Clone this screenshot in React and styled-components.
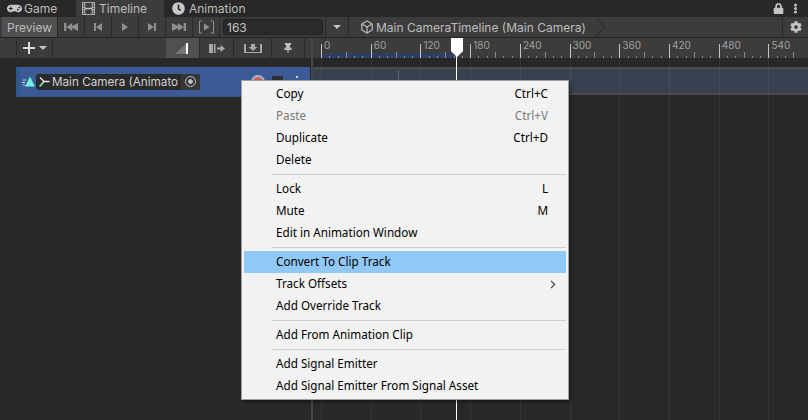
import React from 'react'
import styled, { createGlobalStyle } from 'styled-components'
import { FaGamepad, FaLock, FaClock, FaCog, FaThumbtack } from 'react-icons/fa'
import { BsFilm } from 'react-icons/bs'
import { LuBox } from 'react-icons/lu'

const Global = createGlobalStyle`
  html, body { margin: 0; padding: 0; background: #282828; }
  * { box-sizing: border-box; }
`

const TICK_START = 321
const TICK_STEP = 49.72
const LABELS = [0, 60, 120, 180, 240, 300, 360, 420, 480, 540]

const menu = [
  [
    { label: 'Copy', key: 'Ctrl+C' },
    { label: 'Paste', key: 'Ctrl+V', disabled: true },
    { label: 'Duplicate', key: 'Ctrl+D' },
    { label: 'Delete' },
  ],
  [
    { label: 'Lock', key: 'L' },
    { label: 'Mute', key: 'M' },
    { label: 'Edit in Animation Window' },
  ],
  [
    { label: 'Convert To Clip Track', active: true },
    { label: 'Track Offsets', arrow: true },
    { label: 'Add Override Track' },
  ],
  [{ label: 'Add From Animation Clip' }],
  [{ label: 'Add Signal Emitter' }, { label: 'Add Signal Emitter From Signal Asset' }],
]

const Glyph = ({ d, w = 14, h = 10, vw = 12 }) => (
  <svg width={w} height={h} viewBox={`0 0 ${vw} 10`} preserveAspectRatio="none" fill="currentColor">
    <path d={d} />
  </svg>
)

const App = () => {
  const minor = []
  for (let i = 0; i < 58; i++) {
    if (i % 6 === 0) continue
    minor.push({ x: TICK_START + (i * TICK_STEP) / 6, mid: i % 3 === 0 })
  }
  return (
    <Window>
      <Global />
      <TabBar>
        <Tab $pad={7}>
          <TabIcon><FaGamepad size={15} /></TabIcon>
          Game
        </Tab>
        <Tab $active $pad={6}>
          <TabIcon><BsFilm size={13} /></TabIcon>
          Timeline
        </Tab>
        <Tab $pad={8}>
          <TabIcon><FaClock size={13} /></TabIcon>
          Animation
        </Tab>
        <TabActions>
          <FaLock size={11} />
          <Dots />
        </TabActions>
      </TabBar>

      <Toolbar>
        <PreviewButton>Preview</PreviewButton>
        <ToolButton><Glyph d="M0 1h2v8H0zM2 5l5-4v3l5-3v8L7 6v3z" /></ToolButton>
        <ToolButton><Glyph w={10} vw={10} d="M1 1h2v8H1zM3 5l6-4v8z" /></ToolButton>
        <ToolButton><Glyph w={8} vw={8} d="M1 1l6 4-6 4z" /></ToolButton>
        <ToolButton><Glyph w={10} vw={10} d="M7 1h2v8H7zM1 1l6 4-6 4z" /></ToolButton>
        <ToolButton><Glyph d="M10 1h2v8h-2zM0 1l5 3V1l5 4-5 4V6L0 9z" /></ToolButton>
        <ToolButton>
          <svg width="17" height="14" viewBox="0 0 17 14" fill="none" stroke="currentColor">
            <path d="M4 1H1.5v12H4M13 1h2.5v12H13" />
            <path d="M6 3.5l5.5 3.5L6 10.500z" fill="currentColor" stroke="none" />
          </svg>
        </ToolButton>
        <FrameField>163</FrameField>
        <Caret />
        <Crumb>
          <LuBox size={14} />
          <CrumbText>Main CameraTimeline (Main Camera)</CrumbText>
          <CrumbArrow />
        </Crumb>
        <GearButton><FaCog size={12} /></GearButton>
      </Toolbar>

      <SecondRow>
        <LeftTools>
          <AddButton>
            <PlusIcon />
            <SmallCaret />
          </AddButton>
          <ModeButton $active>
            <svg width="16" height="11" viewBox="0 0 16 11">
              <path d="M0 11L12 0v11z" fill="#777" />
              <path d="M11 0h2v11h-2z" fill="#fff" />
            </svg>
          </ModeButton>
          <ModeButton>
            <svg width="16" height="11" viewBox="0 0 16 11" fill="currentColor">
              <path d="M0 1h4v9H0zM5 1h1.500v9H5zM8 4.500h3.500V2l4.500 3.500L11.500 9V6.500H8z" />
            </svg>
          </ModeButton>
          <ModeButton $w={38}>
            <svg width="18" height="11" viewBox="0 0 18 11" fill="currentColor">
              <path d="M0 1h2v9H0zM16 1h2v9h-2zM7 1h4v3h2.500L9 8 4.500 4H7zM2 9h14v1H2z" />
            </svg>
          </ModeButton>
          <PinButton><FaThumbtack size={10} /></PinButton>
        </LeftTools>
        <Sep />
        <Ruler>
          <Played />
          {LABELS.map((n, i) => (
            <RulerMark key={n} style={{ left: TICK_START - 313 + i * TICK_STEP }}>
              <span>{n}</span>
            </RulerMark>
          ))}
          {minor.map((m) => (
            <MinorTick key={m.x} $mid={m.mid} style={{ left: Math.round(m.x - 313) }} />
          ))}
        </Ruler>
      </SecondRow>

      <Body>
        <Tracks>
          <TrackHeader>
            <TrackIcon>
              <svg width="14" height="11" viewBox="0 0 14 11">
                <path d="M1 4h3M0 6.500h3M1 9h2" stroke="#c8e4f0" strokeWidth="1" />
                <path d="M3 10.500L8 0.500l5 10z" fill="#6ff0e2" />
              </svg>
            </TrackIcon>
            <Binding>
              <BindingIcon>
                <svg width="11" height="11" viewBox="0 0 11 11" fill="none">
                  <path d="M1 1.500l4 4h5.500M1.500 9.500l3.500-4" stroke="#e8e8e8" strokeWidth="1.300" />
                  <path d="M0.500 10.500l2.500-2.500" stroke="#58d8b8" strokeWidth="1.600" />
                </svg>
              </BindingIcon>
              <BindingName>Main Camera (Animato</BindingName>
              <TargetBox><Target /></TargetBox>
            </Binding>
            <RecordIcon />
            <MuteIcon />
            <MoreDot />
          </TrackHeader>
        </Tracks>
        <Sep />
        <Canvas>
          <TrackBody />
          <ClipMark />
          {LABELS.map((n, i) => (
            <GridLine key={n} style={{ left: TICK_START - 313 + i * TICK_STEP }} />
          ))}
        </Canvas>
      </Body>

      <Playhead>
        <PlayheadCap />
      </Playhead>

      <Menu>
        {menu.map((group, g) => (
          <React.Fragment key={g}>
            {g > 0 && <Divider />}
            {group.map((item) => (
              <MenuItem key={item.label} $active={item.active} $disabled={item.disabled}>
                <span>{item.label}</span>
                {item.key && <span>{item.key}</span>}
                {item.arrow && (
                  <Chevron>
                    <svg width="6" height="9" viewBox="0 0 6 9" fill="none" stroke="#444" strokeWidth="1.200">
                      <path d="M1 .8l3.700 3.700L1 8.200" />
                    </svg>
                  </Chevron>
                )}
              </MenuItem>
            ))}
          </React.Fragment>
        ))}
      </Menu>
    </Window>
  )
}

export default App

const Window = styled.div`
  position: relative;
  width: 808px;
  height: 420px;
  overflow: hidden;
  display: flex;
  flex-direction: column;
  background: #282828;
  color: #c4c4c4;
  font-family: Inter, 'Liberation Sans', sans-serif;
  font-size: 12px;
`

const TabBar = styled.div`
  height: 17px;
  flex: none;
  display: flex;
  background: #282828;
`

const Tab = styled.div`
  height: 17px;
  width: ${(p) => (p.$active ? '88px' : '76px')};
  display: flex;
  align-items: center;
  padding-left: ${(p) => p.$pad}px;
  background: ${(p) => (p.$active ? '#3c3c3c' : 'transparent')};
  color: #bdbdbd;
  font-size: 12px;
`

const TabIcon = styled.div`
  width: 16px;
  margin-right: 1px;
  flex: none;
  display: flex;
  color: #c8c8c8;
`

const TabActions = styled.div`
  margin-left: auto;
  height: 17px;
  width: 35px;
  display: flex;
  align-items: center;
  gap: 10px;
  color: #c4c4c4;
`

const Dots = styled.div`
  width: 3px;
  height: 3px;
  border-radius: 50%;
  background: #c4c4c4;
  box-shadow: 0 -3.5px 0 #c4c4c4, 0 3.5px 0 #c4c4c4;
`

const Toolbar = styled.div`
  height: 21px;
  flex: none;
  display: flex;
  align-items: stretch;
  background: #3c3c3c;
  border-bottom: 1px solid #232323;
`

const PreviewButton = styled.div`
  width: 56px;
  margin-left: 2px;
  display: flex;
  align-items: center;
  justify-content: center;
  background: #505050;
  color: #bdbdbd;
  font-size: 12px;
  border-right: 1px solid #2a2a2a;
`

const ToolButton = styled.div`
  width: 27px;
  flex: none;
  display: flex;
  align-items: center;
  justify-content: center;
  border-right: 1px solid #2a2a2a;
  color: #8f8f8f;
`

const FrameField = styled.div`
  width: 100px;
  margin: 2px 2px 2px 3px;
  padding-left: 3px;
  display: flex;
  align-items: center;
  background: #2a2a2a;
  border: 1px solid #212121;
  border-radius: 3px;
  color: #c4c4c4;
  font-size: 12px;
`

const Caret = styled.div`
  width: 24px;
  flex: none;
  position: relative;
  border-left: 1px solid #2a2a2a;
  border-right: 1px solid #2a2a2a;
  &::after {
    content: '';
    position: absolute;
    left: 7px;
    top: 8px;
    border-left: 4px solid transparent;
    border-right: 4px solid transparent;
    border-top: 4px solid #c4c4c4;
  }
`

const Crumb = styled.div`
  flex: 1;
  display: flex;
  align-items: center;
  padding-left: 11px;
  overflow: hidden;
  color: #bdbdbd;
`

const CrumbText = styled.span`
  margin-left: 2px;
  white-space: nowrap;
  font-size: 12px;
`

const CrumbArrow = styled.div`
  width: 13px;
  height: 13px;
  margin-left: 4px;
  flex: none;
  transform: rotate(45deg);
  border-top: 1px solid #2a2a2a;
  border-right: 1px solid #2a2a2a;
`

const GearButton = styled.div`
  width: 26px;
  flex: none;
  display: flex;
  align-items: center;
  justify-content: center;
  border-left: 1px solid #2a2a2a;
  color: #c4c4c4;
`

const SecondRow = styled.div`
  height: 20px;
  flex: none;
  display: flex;
  background: #3c3c3c;
`

const LeftTools = styled.div`
  width: 311px;
  flex: none;
  display: flex;
  align-items: stretch;
  padding-left: 16px;
`

const Sep = styled.div`
  width: 2px;
  flex: none;
  background: #474747;
`

const AddButton = styled.div`
  width: 37px;
  margin-right: 113px;
  display: flex;
  align-items: center;
  justify-content: center;
  gap: 4px;
  border-left: 1px solid #2a2a2a;
  border-right: 1px solid #2a2a2a;
`

const PlusIcon = styled.div`
  width: 12px;
  height: 12px;
  background:
    linear-gradient(#ddd, #ddd) center / 12px 2px no-repeat,
    linear-gradient(#ddd, #ddd) center / 2px 12px no-repeat;
`

const SmallCaret = styled.div`
  border-left: 4px solid transparent;
  border-right: 4px solid transparent;
  border-top: 4px solid #c4c4c4;
`

const ModeButton = styled.div`
  width: ${(p) => p.$w || 34}px;
  display: flex;
  align-items: center;
  justify-content: center;
  background: ${(p) => (p.$active ? '#505050' : 'transparent')};
  border-right: 1px solid #2a2a2a;
  color: #a8a8a8;
`

const PinButton = styled(ModeButton)`
  width: 33px;
  color: #bdbdbd;
`

const Ruler = styled.div`
  flex: 1;
  position: relative;
`

const Played = styled.div`
  position: absolute;
  left: 8px;
  bottom: 0;
  width: 135px;
  height: 5px;
  background: #2d3e62;
`

const RulerMark = styled.div`
  position: absolute;
  top: 6px;
  bottom: 0;
  width: 1px;
  background: #c4c4c4;
  span {
    position: absolute;
    left: 3px;
    top: -5px;
    font-size: 10px;
    line-height: 13px;
    color: #a0a0a0;
  }
`

const MinorTick = styled.div`
  position: absolute;
  bottom: 0;
  width: 1px;
  height: ${(p) => (p.$mid ? '6px' : '2px')};
  background: #8a8a8a;
`

const Body = styled.div`
  flex: 1;
  display: flex;
  min-height: 0;
`

const Tracks = styled.div`
  width: 311px;
  flex: none;
  padding: 9px 1px 0 16px;
`

const TrackHeader = styled.div`
  height: 30px;
  display: flex;
  align-items: center;
  padding-left: 2px;
  background: #3c5a96;
  border-left: 4px solid #2c5a8e;
  border-bottom: 1px solid #35507f;
`

const TrackIcon = styled.div`
  width: 14px;
  flex: none;
  display: flex;
`

const Binding = styled.div`
  width: 164px;
  height: 16px;
  flex: none;
  display: flex;
  align-items: center;
  background: #2a2a2a;
  border-radius: 3px;
  color: #d0d0d0;
  font-size: 11.7px;
  overflow: hidden;
`

const BindingIcon = styled.div`
  width: 13px;
  margin-left: 3px;
  flex: none;
  display: flex;
`

const BindingName = styled.span`
  width: 129px;
  flex: none;
  white-space: nowrap;
`

const TargetBox = styled.div`
  flex: 1;
  align-self: stretch;
  display: flex;
  align-items: center;
  justify-content: center;
  background: #363636;
`

const Target = styled.div`
  width: 11px;
  height: 11px;
  border: 1px solid #c4c4c4;
  border-radius: 50%;
  background: radial-gradient(circle, #c4c4c4 0 2px, transparent 2.5px);
`

const RecordIcon = styled.div`
  width: 14px;
  height: 14px;
  margin-left: 51px;
  flex: none;
  border: 2px solid #a8b4cc;
  border-radius: 50%;
  background: #c06a5c;
`

const MuteIcon = styled.div`
  width: 11px;
  height: 11px;
  margin-left: 7px;
  flex: none;
  background: #2f2f2f;
`

const MoreDot = styled.div`
  width: 2px;
  height: 2px;
  margin: -9px 0 0 13px;
  flex: none;
  background: #d0d0d0;
`

const Canvas = styled.div`
  flex: 1;
  position: relative;
  padding-top: 9px;
`

const TrackBody = styled.div`
  height: 28px;
  background: #394050;
  border-top: 2px solid #4b4b4b;
  border-bottom: 2px solid #4b4b4b;
`

const ClipMark = styled.div`
  position: absolute;
  left: 85px;
  top: 12px;
  width: 1px;
  height: 10px;
  background: #5c6270;
`

const GridLine = styled.div`
  position: absolute;
  top: 0;
  bottom: 0;
  width: 1px;
  background: rgba(255, 255, 255, 0.06);
`

const Playhead = styled.div`
  position: absolute;
  left: 456px;
  top: 38px;
  bottom: 0;
  width: 1px;
  background: #fff;
`

const PlayheadCap = styled.div`
  position: absolute;
  left: -5px;
  top: 0;
  width: 12px;
  height: 19px;
  background: #fff;
  clip-path: polygon(0 0, 100% 0, 100% 70%, 50% 100%, 0 70%);
`

const Menu = styled.div`
  position: absolute;
  left: 241px;
  top: 80px;
  width: 328px;
  height: 320px;
  padding: 2px;
  background: #f2f2f2;
  border: 1px solid #a0a0a0;
  box-shadow: 2px 2px 3px rgba(0, 0, 0, 0.4);
  font-family: 'Noto Sans', 'Liberation Sans', sans-serif;
  font-size: 11.7px;
`

const MenuItem = styled.div`
  height: 22px;
  display: flex;
  align-items: center;
  justify-content: space-between;
  padding: 0 18px 2px 32px;
  background: ${(p) => (p.$active ? '#90c8f6' : 'transparent')};
  color: ${(p) => (p.$disabled ? '#7a7a7a' : '#000')};
`

const Chevron = styled.span`
  display: flex;
  margin: 2px -8px 0 0;
`

const Divider = styled.div`
  height: 1px;
  margin: 3px 0 3px 28px;
  background: #d0d0d0;
`
